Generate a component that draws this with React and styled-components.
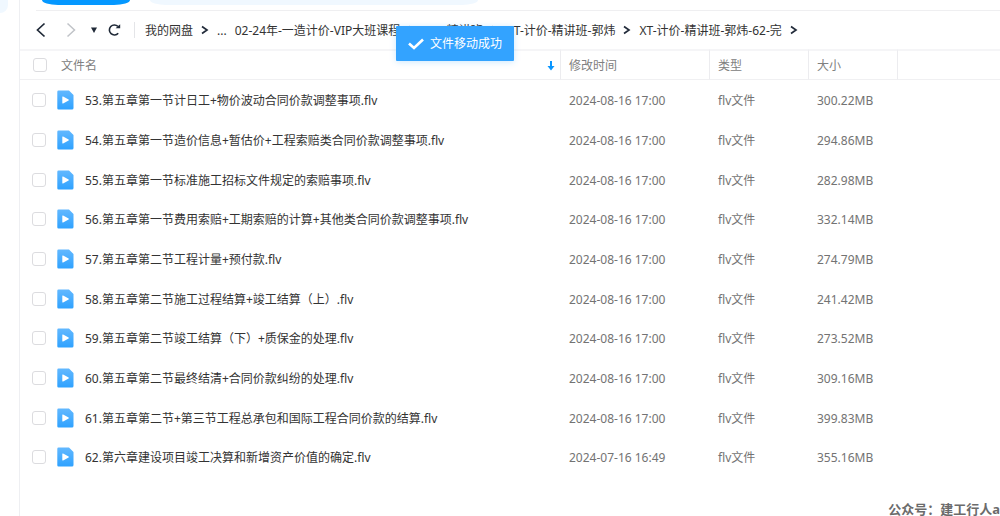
import React from 'react';
import styled, { createGlobalStyle } from 'styled-components';

const GlobalStyle = createGlobalStyle`
  * {
    box-sizing: border-box;
  }
  body {
    margin: 0;
    background: #fff;
    color: #333;
    font-family: "Noto Sans", "Noto Sans CJK SC", sans-serif;
    font-size: 12px;
    line-height: 18px;
    overflow: hidden;
  }
  button {
    border: none;
    background: none;
    padding: 0;
    font: inherit;
    color: inherit;
    cursor: pointer;
  }
`;

const Page = styled.div`
  display: flex;
  min-height: 100vh;
  position: relative;
`;

const Sidebar = styled.aside`
  width: 20px;
  flex: none;
  border-right: 1px solid #eeeff2;
`;

const SidebarItem = styled.div`
  width: 8px;
  height: 13px;
  background: #f0f8ff;
  border-bottom-right-radius: 8px;
`;

const Main = styled.main`
  flex: 1;
  min-width: 0;
`;

const TopBar = styled.div`
  display: flex;
  align-items: flex-start;
  gap: 20px;
  height: 10px;
  padding-left: 22px;
`;

const UploadButton = styled.button`
  width: 88px;
  height: 5px;
  background: #0598ff;
  border-radius: 0 0 16px 16px / 0 0 5px 5px;
`;

const SearchBox = styled.div`
  width: 328px;
  height: 5px;
  background: #f0f8ff;
  border-radius: 0 0 16px 16px / 0 0 5px 5px;
`;

const PathBar = styled.nav`
  display: flex;
  align-items: center;
  height: 39px;
  margin-left: 16px;
  border-top: 1px solid #efeff1;
  white-space: nowrap;
`;

const Tools = styled.div`
  display: flex;
  align-items: center;
  margin-left: -14px;
  margin-right: 10px;
  padding-right: 12px;
  height: 16px;
  border-right: 1px solid #e4e5e8;
`;

const ToolButton = styled.button`
  display: flex;
  justify-content: center;
  width: ${(props) => props.$width}px;
`;

const Crumbs = styled.div`
  display: flex;
  align-items: center;
  gap: 8px;

  svg {
    flex: none;
  }
`;

const Crumb = styled.a`
  padding-top: 2px;
  color: #333;
  text-decoration: none;
`;

const Table = styled.table`
  width: 100%;
  table-layout: fixed;
  border-collapse: separate;
  border-spacing: 0;
`;

const Col = styled.col`
  width: ${(props) => props.$width};
`;

const HeadCell = styled.th`
  height: 31px;
  padding: 2px 8px 0;
  border-top: 2px solid #f5f5f7;
  border-bottom: 1px solid #f0f0f2;
  border-right: ${(props) => (props.$last ? 'none' : '1px solid #ececef')};
  color: #808080;
  font-weight: 400;
  text-align: left;
`;

const Row = styled.tr`
  height: 40px;

  &:nth-child(3n) {
    height: 39px;
  }
`;

const Cell = styled.td`
  padding: 2px 8px 0;
  color: #737373;
  white-space: nowrap;
`;

const NameCell = styled.div`
  display: flex;
  align-items: center;
  gap: ${(props) => props.$gap}px;
  padding-left: ${(props) => props.$indent}px;
  color: ${(props) => props.$color};
`;

const SortIcon = styled.svg`
  margin-left: auto;
  margin-right: -3px;
`;

const Checkbox = styled.input`
  appearance: none;
  flex: none;
  width: 14px;
  height: 14px;
  margin: 0 0 2px;
  border: 1px solid #dcdcdf;
  border-radius: 3px;
  background: #fff;
`;

const FileLabel = styled.label`
  display: flex;
  align-items: center;
  gap: 11px;

  svg {
    margin-bottom: 2px;
  }
`;

const Toast = styled.div`
  position: absolute;
  top: 26px;
  left: calc(50% - 104px);
  display: flex;
  align-items: center;
  gap: 6px;
  height: 35px;
  padding: 0 12px;
  border-radius: 1px;
  background: #33a3ff;
  box-shadow: 0 1px 6px rgba(51, 163, 255, 0.25);
  color: #fff;
`;

const Watermark = styled.div`
  position: absolute;
  right: 0;
  bottom: -2px;
  color: #6b6b6b;
  font-size: 13px;
  font-weight: 700;
  white-space: nowrap;
`;

const files = [
  ['53.第五章第一节计日工+物价波动合同价款调整事项.flv', '2024-08-16 17:00', '300.22MB'],
  ['54.第五章第一节造价信息+暂估价+工程索赔类合同价款调整事项.flv', '2024-08-16 17:00', '294.86MB'],
  ['55.第五章第一节标准施工招标文件规定的索赔事项.flv', '2024-08-16 17:00', '282.98MB'],
  ['56.第五章第一节费用索赔+工期索赔的计算+其他类合同价款调整事项.flv', '2024-08-16 17:00', '332.14MB'],
  ['57.第五章第二节工程计量+预付款.flv', '2024-08-16 17:00', '274.79MB'],
  ['58.第五章第二节施工过程结算+竣工结算（上）.flv', '2024-08-16 17:00', '241.42MB'],
  ['59.第五章第二节竣工结算（下）+质保金的处理.flv', '2024-08-16 17:00', '273.52MB'],
  ['60.第五章第二节最终结清+合同价款纠纷的处理.flv', '2024-08-16 17:00', '309.16MB'],
  ['61.第五章第二节+第三节工程总承包和国际工程合同价款的结算.flv', '2024-08-16 17:00', '399.83MB'],
  ['62.第六章建设项目竣工决算和新增资产价值的确定.flv', '2024-07-16 16:49', '355.16MB'],
];

const Separator = () => (
  <svg width="8" height="10" viewBox="0 0 8 10" fill="none" stroke="#222b3a" strokeWidth="1.7">
    <path d="M1 1.5 6 5 1 8.5" />
  </svg>
);

const VideoIcon = () => (
  <svg width="17" height="20" viewBox="0 0 17 20">
    <defs>
      <linearGradient id="video" x1="0" y1="0" x2="0" y2="1">
        <stop offset="0" stopColor="#62b8ff" />
        <stop offset="1" stopColor="#2fa2ff" />
      </linearGradient>
    </defs>
    <path d="M1.5.5h10.5l4.5 4.5v13a1.5 1.5 0 0 1-1.5 1.5h-13.5a1.2 1.2 0 0 1-1.2-1.2V1.7A1.2 1.2 0 0 1 1.5.5z" fill="url(#video)" />
    <path d="M5.3 6.9v6.2a.5.5 0 0 0 .8.4l5.5-3.1a.5.5 0 0 0 0-.8L6.1 6.5a.5.5 0 0 0-.8.4z" fill="#fff" />
  </svg>
);

const App = () => {
  return (
    <>
      <GlobalStyle />
      <Page>
        <Sidebar>
          <SidebarItem />
        </Sidebar>
        <Main>
          <TopBar>
            <UploadButton aria-label="上传" />
            <SearchBox />
          </TopBar>
          <PathBar>
            <Tools>
              <ToolButton $width={38} aria-label="后退">
                <svg width="10" height="16" viewBox="0 0 10 16" fill="none" stroke="#1f2937" strokeWidth="1.7">
                  <path d="M8.5 1.5 1.5 8l7 6.5" />
                </svg>
              </ToolButton>
              <ToolButton $width={22} aria-label="前进">
                <svg width="10" height="16" viewBox="0 0 10 16" fill="none" stroke="#c0c3c8" strokeWidth="1.5">
                  <path d="M1.5 1.5 8.5 8l-7 6.5" />
                </svg>
              </ToolButton>
              <ToolButton $width={24} aria-label="历史">
                <svg width="6" height="6" viewBox="0 0 6 6">
                  <path d="M0 .5h6L3 6z" fill="#1f2937" />
                </svg>
              </ToolButton>
              <ToolButton $width={16} aria-label="刷新">
                <svg width="14" height="14" viewBox="0 0 14 14">
                  <path d="M10.9 3.4A5 5 0 1 0 11.2 10.2" fill="none" stroke="#1f2937" strokeWidth="1.6" />
                  <path d="M8.6 5.2h4.6V1.2z" fill="#1f2937" />
                </svg>
              </ToolButton>
            </Tools>
            <Crumbs>
              <Crumb href="#">我的网盘</Crumb>
              <Separator />
              <Crumb href="#">...</Crumb>
              <Crumb href="#">02-24年-一造计价-VIP大班课程</Crumb>
              <Separator />
              <Crumb href="#">VIP-精讲班</Crumb>
              <Separator />
              <Crumb href="#">XT-计价-精讲班-郭炜</Crumb>
              <Separator />
              <Crumb href="#">XT-计价-精讲班-郭炜-62-完</Crumb>
              <Separator />
            </Crumbs>
          </PathBar>
          <Table>
            <colgroup>
              <Col $width="auto" />
              <Col $width="149px" />
              <Col $width="99px" />
              <Col $width="89px" />
              <Col $width="102px" />
            </colgroup>
            <thead>
              <tr>
                <HeadCell>
                  <NameCell $indent={5} $gap={14} $color="#808080">
                    <Checkbox type="checkbox" aria-label="全选" />
                    文件名
                    <SortIcon width="8" height="10" viewBox="0 0 8 10">
                      <path d="M3 0h2v5h2.5L4 9.5.5 5H3z" fill="#0a96ff" />
                    </SortIcon>
                  </NameCell>
                </HeadCell>
                <HeadCell>修改时间</HeadCell>
                <HeadCell>类型</HeadCell>
                <HeadCell>大小</HeadCell>
                <HeadCell $last aria-hidden="true" />
              </tr>
            </thead>
            <tbody>
              {files.map(([name, time, size], i) => (
                <Row key={name}>
                  <Cell>
                    <NameCell $indent={4} $gap={11} $color="#333">
                      <Checkbox type="checkbox" id={`file-${i}`} />
                      <FileLabel htmlFor={`file-${i}`}>
                        <VideoIcon />
                        {name}
                      </FileLabel>
                    </NameCell>
                  </Cell>
                  <Cell>{time}</Cell>
                  <Cell>flv文件</Cell>
                  <Cell>{size}</Cell>
                  <Cell />
                </Row>
              ))}
            </tbody>
          </Table>
        </Main>
        <Toast role="status">
          <svg width="16" height="12" viewBox="0 0 16 12" fill="none" stroke="#fff" strokeWidth="2.6">
            <path d="M1 5.5 6 10 15 1.5" />
          </svg>
          文件移动成功
        </Toast>
        <Watermark>公众号：建工行人a</Watermark>
      </Page>
    </>
  );
};

export default App;
